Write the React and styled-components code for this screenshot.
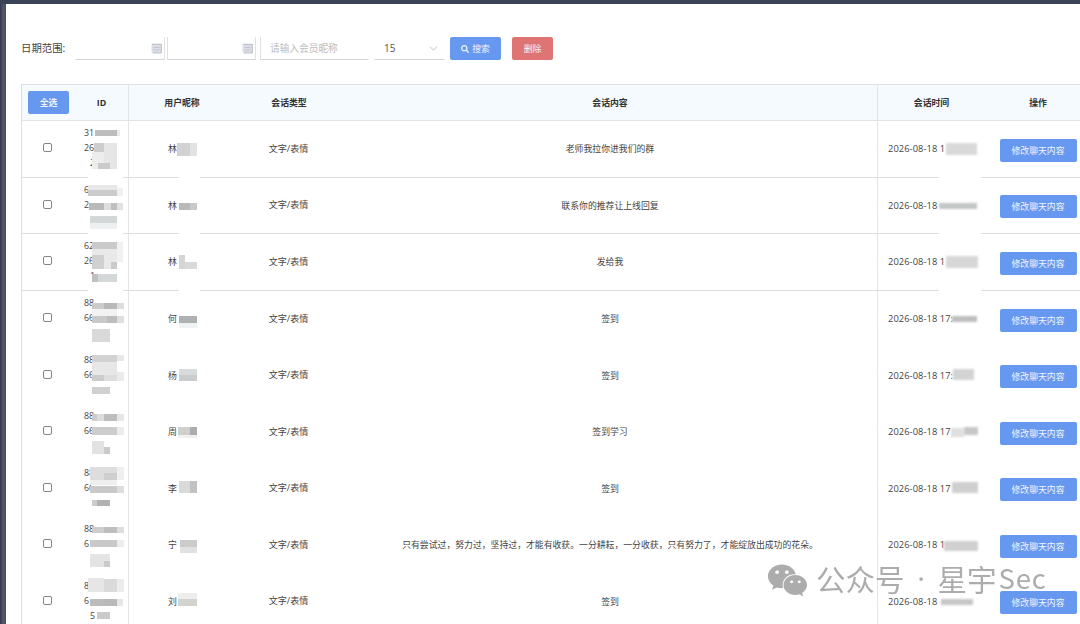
import { ChevronDown } from 'lucide-react';
import React from 'react';
import { FaSearch, FaWeixin } from 'react-icons/fa';
import styled, { createGlobalStyle } from 'styled-components';

const GlobalStyle = createGlobalStyle`
  * {
    box-sizing: border-box;
  }

  body {
    margin: 0;
    overflow: hidden;
    background: #fff;
    color: #444;
    font-family: 'Open Sans', 'Noto Sans CJK SC', sans-serif;
    font-size: 8.85px;
  }
`;

const Frame = styled.div`
  position: relative;
  display: flex;
  width: 1080px;
  height: 624px;
  overflow: hidden;
  border-top: 4px solid #3a4355;
`;

const Rail = styled.div`
  flex: none;
  width: 6px;
  background: linear-gradient(90deg, #34384c, #56596d 60%, #474c60);
`;

const Page = styled.main`
  flex: none;
  width: 1100px;
  padding: 33px 0 0 15px;
`;

const Toolbar = styled.div`
  display: flex;
  align-items: center;
  height: 23px;
  margin-bottom: 24px;
`;

const Label = styled.label`
  width: 54px;
  margin-top: -2px;
  color: #444;
  font-size: 10.4px;
  white-space: nowrap;
`;

const Field = styled.div`
  display: flex;
  align-items: center;
  justify-content: space-between;
  width: ${({ $width }) => $width}px;
  height: 23px;
  margin-right: ${({ $gap }) => $gap}px;
  padding: 0 ${({ $end }) => $end || 2}px 0 9px;
  border: solid transparent;
  border-width: 0 1px 1px;
  border-bottom-color: #d6d6d6;
  border-right-color: ${({ $right }) => ($right ? '#e2e2e2' : 'transparent')};
  border-left-color: ${({ $left }) => ($left ? '#e2e2e2' : 'transparent')};
  color: ${({ $muted }) => ($muted ? '#bcbcbc' : '#555')};
  font-size: ${({ $muted }) => ($muted ? 9.7 : 10)}px;
  white-space: nowrap;
`;

const Button = styled.button`
  display: flex;
  flex: none;
  align-items: center;
  justify-content: center;
  gap: 3px;
  width: ${({ $width }) => $width}px;
  height: 23px;
  margin: 0;
  margin-right: ${({ $gap }) => $gap || 0}px;
  padding: 0;
  border: 0;
  border-radius: 2px;
  background: ${({ $danger }) => ($danger ? '#df7474' : '#6698ef')};
  color: #eef5ff;
  font: inherit;
`;

const Table = styled.div`
  width: 1070px;
  border-top: 1px solid #dfe1e3;
  border-left: 1px solid #dedede;
`;

const Row = styled.div`
  position: relative;
  display: grid;
  grid-template-columns: 53px 54px 106px 108px 535px 107px 106px;
  height: 56.5px;
  border-bottom: ${({ $line }) => ($line ? '1px solid #dedede' : '0')};
`;

const HeadRow = styled(Row)`
  height: 36px;
  border-bottom: 1px solid #e0e4e6;
  background: #f4fafe;
  color: #333;
  font-weight: 700;
`;

const Cell = styled.div`
  display: flex;
  align-items: center;
  justify-content: ${({ $start }) => ($start ? 'flex-start' : 'center')};
  padding-left: ${({ $start }) => $start || 0}px;
  padding-right: ${({ $end }) => $end || 0}px;
  border-right: ${({ $rule }) => ($rule ? '1px solid #e2e4e5' : '0')};
  white-space: pre;
`;

const IdCell = styled(Cell)`
  flex-direction: column;
  align-items: flex-start;
  justify-content: center;
  padding: 0 0 0 9px;
  line-height: 15px;
`;

const IdLine = styled.span`
  height: 15px;
  padding-left: ${({ $indent }) => ($indent ? 6 : 0)}px;
`;

const Kind = styled.span`
  margin-top: -2px;
  font-size: 9.1px;
`;

const DateText = styled.span`
  font-size: 9.3px;
  letter-spacing: 0.08px;
`;

const Check = styled.span`
  width: 9px;
  height: 9px;
  margin-bottom: 2px;
  border: 1px solid #858585;
  border-radius: 2px;
  background: #fff;
`;

const Action = styled(Button)`
  margin-top: 3px;
`;

// pixelated patch hiding private values, laid over the row
const Patch = styled.i`
  position: absolute;
  top: ${({ $y }) => $y}px;
  left: ${({ $x }) => $x}px;
  width: ${({ $w }) => $w}px;
  height: ${({ $h }) => $h}px;
  background: ${({ $tone }) => $tone};
`;

const SoftPatch = styled(Patch)`
  filter: blur(1px);
`;

const Watermark = styled.div`
  position: absolute;
  top: 553px;
  left: 767px;
  display: flex;
  align-items: center;
  gap: 8px;
  height: 46px;
  color: #969696;
  font-family: 'Noto Sans CJK SC', sans-serif;
  font-size: 29.5px;
  font-weight: 400;
  opacity: 0.78;
  white-space: pre;
`;

const Account = styled.span`
  display: flex;
  margin-top: -4px;
`;

const Dot = styled.span`
  width: 33px;
  font-family: 'Open Sans', sans-serif;
  text-align: center;
`;

const Latin = styled.span`
  margin-left: 2px;
  font-size: 27.5px;
  letter-spacing: 0.8px;
`;

// patches are [x, y, width, height, tone], measured from the row's corner
const rows = [
  {
    id: ['31', '26', '2'], name: '林', content: '老师我拉你进我们的群', time: '2026-08-18 1', line: true,
    patches: [
      [73, 9, 22, 6, '#bdbdbd'], [95, 9, 3, 6, '#ebebeb'], [72, 22, 10, 9, '#cdcdcd'],
      [82, 22, 13, 26, '#e6e6e6'], [70, 31, 12, 17, '#ededed'], [76, 42, 12, 6, '#cacaca'],
      [155, 22, 13, 13, '#d2d2d2'], [168, 22, 7, 13, '#e2e2e2']
    ],
    soft: [[924, 22, 31, 12, '#d9d9d9']]
  },
  {
    id: ['6', '2', ''], name: '林', content: '联系你的推荐让上线回复', time: '2026-08-18', line: true,
    patches: [
      [66, 7, 29, 5, '#e8e8e8'], [66, 12, 29, 6, '#cbcbcb'], [95, 10, 6, 8, '#f0f0f0'],
      [67, 25, 15, 7, '#b9b9b9'], [82, 25, 7, 7, '#dedede'], [89, 25, 6, 7, '#bebebe'],
      [95, 25, 6, 7, '#e1e1e1'], [68, 38, 27, 7, '#d3d7d8'], [68, 45, 27, 6, '#edf0f0'],
      [157, 25, 11, 7, '#b9b9b9'], [168, 25, 7, 7, '#c9c9c9']
    ],
    soft: [[917, 25, 38, 6, '#c3c6c6']]
  },
  {
    id: ['62', '26', '1'], name: '林', content: '发给我', time: '2026-08-18 1', line: true,
    patches: [
      [70, 8, 25, 7, '#cacaca'], [70, 15, 25, 20, '#e9e9e9'], [70, 21, 12, 14, '#d0d0d0'],
      [89, 28, 6, 7, '#cacaca'], [95, 8, 6, 20, '#f1f1f1'], [70, 40, 6, 8, '#c0c0c0'],
      [76, 40, 19, 8, '#d5d8d8'], [157, 21, 6, 14, '#d5d5d5'], [163, 28, 12, 7, '#d9d9d9']
    ],
    soft: [[924, 22, 32, 12, '#d7d7d7']]
  },
  {
    id: ['88', '66', ''], name: '何', content: '签到', time: '2026-08-18 17:',
    patches: [
      [70, 12, 12, 6, '#cbcbcb'], [82, 12, 13, 6, '#b9b9b9'], [95, 12, 7, 6, '#dddddd'],
      [70, 18, 25, 7, '#f2f2f2'], [70, 25, 15, 7, '#c9c9c9'], [85, 25, 10, 7, '#bdbdbd'],
      [95, 25, 7, 7, '#dedede'], [70, 38, 18, 13, '#d9d9d9'], [157, 25, 18, 7, '#aeb1b1'],
      [157, 32, 18, 5, '#eff3f3']
    ],
    soft: [[930, 25, 25, 6, '#bebebe']]
  },
  {
    id: ['88', '66', ''], name: '杨', content: '签到', time: '2026-08-18 17:',
    patches: [
      [70, 8, 25, 7, '#d2d2d2'], [70, 15, 25, 18, '#e7e7e7'], [70, 28, 12, 6, '#cccccc'],
      [82, 28, 13, 6, '#dddddd'], [95, 8, 7, 6, '#e7e7e7'], [95, 25, 7, 9, '#ebebeb'],
      [70, 40, 18, 7, '#d0d0d0'], [157, 22, 18, 6, '#d8dbdb'], [157, 28, 18, 6, '#c8cccc']
    ],
    soft: [[931, 22, 21, 11, '#d3d3d3']]
  },
  {
    id: ['88', '66', ''], name: '周', content: '签到学习', time: '2026-08-18 17',
    patches: [
      [70, 10, 5, 7, '#cccccc'], [75, 10, 7, 7, '#dddddd'], [82, 10, 13, 7, '#bdbdbd'],
      [95, 10, 7, 7, '#e6e6e6'], [70, 23, 25, 8, '#cccccc'], [95, 23, 7, 8, '#ececec'],
      [70, 37, 12, 13, '#e2e2e2'], [82, 43, 6, 7, '#cacaca'], [156, 23, 12, 8, '#cfcfcb'],
      [168, 23, 7, 8, '#acacac'], [156, 31, 19, 3, '#f0f0f0']
    ],
    soft: [[929, 24, 13, 9, '#dfdfdf'], [942, 23, 14, 8, '#c7c7c7']]
  },
  {
    id: ['88', '66', ''], name: '李', content: '签到', time: '2026-08-18 17',
    patches: [
      [68, 7, 27, 13, '#dddddd'], [82, 13, 13, 7, '#cecece'], [68, 20, 27, 5, '#eeeeee'],
      [95, 7, 7, 13, '#efefef'], [68, 26, 27, 7, '#c9c9c9'], [95, 26, 7, 7, '#dddddd'],
      [70, 40, 5, 6, '#cccccc'], [75, 40, 13, 6, '#b2b2b2'], [157, 21, 11, 12, '#dadada'],
      [168, 21, 7, 12, '#c1c1c1']
    ],
    soft: [[930, 22, 26, 11, '#cfcfcf']]
  },
  {
    id: ['88', '6', ''], name: '宁', content: '只有尝试过，努力过，坚持过，才能有收获。一分耕耘，一分收获，只有努力了，才能绽放出成功的花朵。', time: '2026-08-18 1',
    patches: [
      [70, 10, 12, 6, '#cdcdcd'], [82, 10, 13, 6, '#bebebe'], [95, 10, 7, 6, '#dddddd'],
      [68, 23, 27, 7, '#c9c9c9'], [95, 23, 7, 7, '#ededed'], [68, 37, 20, 13, '#e4e4e4'],
      [82, 44, 6, 6, '#cacaca'], [158, 23, 17, 7, '#cbcbcb'], [158, 30, 17, 6, '#e1e1e1']
    ],
    soft: [[922, 24, 34, 10, '#d0d0d0']]
  },
  {
    id: ['8', '6', '5'], name: '刘', content: '签到', time: '2026-08-18',
    patches: [
      [66, 5, 16, 14, '#e6e6e6'], [82, 6, 13, 13, '#dadada'], [95, 6, 7, 13, '#ececec'],
      [68, 26, 14, 7, '#bcbcbc'], [82, 26, 13, 7, '#b9b9b9'], [95, 26, 6, 7, '#e6e6e6'],
      [75, 39, 13, 7, '#cacaca'], [156, 20, 19, 6, '#ededeb'], [156, 26, 19, 7, '#d2d2cf']
    ],
    soft: [[919, 26, 32, 6, '#c6c6c6']]
  }
];

// the row rule is wiped out wherever a patch column crosses it
const gaps = [[66, 35], [157, 21], [917, 42]];

const CalendarIcon = () => (
  <svg width="12" height="11" viewBox="0 0 12 11">
    <rect x="0.5" y="0.5" width="10" height="9.5" rx="1" fill="#dcdee6" />
    <path d="M1 1.5h9M2.5 4.5h6M2.5 7h6" stroke="#c3c6d2" strokeWidth="1.2" />
    <path d="M10.3 1v9H2" stroke="#b0b3bf" fill="none" strokeWidth="0.8" />
  </svg>
);

const RecordRow = ({ record }) => (
  <Row $line={record.line}>
    <Cell $end={2}>
      <Check />
    </Cell>
    <IdCell $rule>
      {record.id.map((part, index) => (
        <IdLine $indent={index === 2} key={index}>{part}</IdLine>
      ))}
    </IdCell>
    <Cell $start={39}>{record.name}</Cell>
    <Cell $end={1}>
      <Kind>文字/表情</Kind>
    </Cell>
    <Cell $rule>{record.content}</Cell>
    <Cell $start={10}>
      <DateText>{record.time}</DateText>
    </Cell>
    <Cell>
      <Action $width={77}>修改聊天内容</Action>
    </Cell>
    {record.line && gaps.map(([x, w]) => (
      <Patch $x={x} $y={54} $w={w} $h={4} $tone="#fff" key={x} />
    ))}
    {record.patches.map(([x, y, w, h, tone]) => (
      <Patch $x={x} $y={y} $w={w} $h={h} $tone={tone} key={`${x}-${y}-${w}`} />
    ))}
    {record.soft.map(([x, y, w, h, tone]) => (
      <SoftPatch $x={x} $y={y} $w={w} $h={h} $tone={tone} key={x} />
    ))}
  </Row>
);

const App = () => (
  <>
    <GlobalStyle />
    <Frame>
      <Rail />
      <Page>
        <Toolbar>
          <Label>日期范围:</Label>
          <Field $width={90} $gap={2} $end={1} $right>
            <span />
            <CalendarIcon />
          </Field>
          <Field $width={89} $gap={4} $end={1} $left $right>
            <span />
            <CalendarIcon />
          </Field>
          <Field $width={109} $gap={5} $left $muted>请输入会员昵称</Field>
          <Field $width={71} $gap={5} $end={4}>
            15
            <ChevronDown color="#bdbdbd" size={13} strokeWidth={1.8} />
          </Field>
          <Button $width={51} $gap={11}>
            <FaSearch size={8} />
            搜索
          </Button>
          <Button $danger $width={41}>删除</Button>
        </Toolbar>
        <Table>
          <HeadRow>
            <Cell>
              <Button $width={41}>全选</Button>
            </Cell>
            <Cell $rule>ID</Cell>
            <Cell>用户昵称</Cell>
            <Cell>会话类型</Cell>
            <Cell $rule>会话内容</Cell>
            <Cell>会话时间</Cell>
            <Cell>操作</Cell>
          </HeadRow>
          {rows.map((record, index) => (
            <RecordRow key={index} record={record} />
          ))}
        </Table>
      </Page>
      <Watermark>
        <FaWeixin size={41} />
        <Account>
          公众号
          <Dot>·</Dot>
          星宇
          <Latin>Sec</Latin>
        </Account>
      </Watermark>
    </Frame>
  </>
);

export default App;
